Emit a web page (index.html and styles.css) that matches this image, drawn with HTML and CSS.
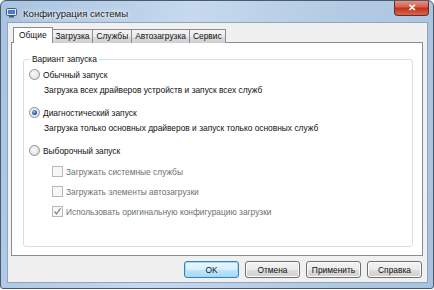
FILE: index.html
```html
<!DOCTYPE html>
<html lang="ru">
<head>
  <meta charset="UTF-8">
  <title>Конфигурация системы</title>
  <link rel="stylesheet" href="styles.css">
</head>
<body>
  <div class="window">
    <!-- Title bar -->
    <div class="titlebar">
      <svg class="app-icon" width="11" height="10" viewBox="0 0 11 10">
        <rect x="0.5" y="0.5" width="10" height="7" rx="1" fill="#dfe6ee" stroke="#4a5a70"/>
        <rect x="2" y="2" width="7" height="4" fill="#3d7fd0"/>
        <rect x="3" y="8" width="5" height="1.5" fill="#4a5a70"/>
      </svg>
      <span class="title">Конфигурация системы</span>
      <div class="close-btn">✕</div>
    </div>

    <div class="client">
      <div class="tabs">
        <div class="tab active">Общие</div>
        <div class="tab">Загрузка</div>
        <div class="tab">Службы</div>
        <div class="tab">Автозагрузка</div>
        <div class="tab">Сервис</div>
      </div>

      <div class="panel">
        <fieldset class="group">
          <legend>Вариант запуска</legend>

          <div class="option">
            <span class="radio"></span>Обычный запуск
          </div>
          <div class="hint">Загрузка всех драйверов устройств и запуск всех служб</div>

          <div class="option second">
            <span class="radio checked"></span>Диагностический запуск
          </div>
          <div class="hint">Загрузка только основных драйверов и запуск только основных служб</div>

          <div class="option second">
            <span class="radio"></span>Выборочный запуск
          </div>

          <div class="check-list">
            <div class="check disabled"><span class="box"></span>Загружать системные службы</div>
            <div class="check disabled"><span class="box"></span>Загружать элементы автозагрузки</div>
            <div class="check disabled">
              <span class="box">
                <svg width="9" height="9" viewBox="0 0 9 9"><polyline points="1.5,4.5 3.5,7 7.5,1.5" fill="none" stroke="#8a8a8a" stroke-width="1.3"/></svg>
              </span>Использовать оригинальную конфигурацию загрузки
            </div>
          </div>
        </fieldset>
      </div>

      <div class="buttons">
        <button class="btn default">OK</button>
        <button class="btn">Отмена</button>
        <button class="btn">Применить</button>
        <button class="btn">Справка</button>
      </div>
    </div>
  </div>
</body>
</html>
```

FILE: styles.css
```css
/* Window frame */
body {
  margin: 0;
  background: #fff;
  font-family: "Liberation Sans", Arial, sans-serif;
  font-size: 8.4px;
  color: #111;
}
.window {
  width: 434px;
  height: 289px;
  box-sizing: border-box;
  border: 1px solid #4b5b6e;
  border-radius: 6px 6px 3px 3px;
  background: linear-gradient(100deg, #a8c3e0 0%, #c6d9ee 40%, #b4cbe4 70%, #a9c2de 100%);
  display: flex;
  flex-direction: column;
  overflow: hidden;
}
.titlebar {
  height: 21px;
  display: flex;
  align-items: center;
  padding-left: 5px;
}
.app-icon {
  margin-right: 6px;
  margin-top: 2px;
}
.title {
  font-size: 9.6px;
  margin-top: 3px;
  color: #1a1a1a;
  text-shadow: 0 0 6px #fff, 0 0 3px #fff;
}
.close-btn {
  margin-left: auto;
  margin-right: 4px;
  align-self: flex-start;
  width: 35px;
  height: 16px;
  margin-top: -1px;
  box-sizing: border-box;
  border: 1px solid #6e2a24;
  border-top: none;
  border-radius: 0 0 4px 4px;
  background: linear-gradient(#e69b8e 0%, #d6604c 45%, #c2331d 55%, #d5664e 100%);
  color: #fff;
  font-size: 10px;
  font-weight: bold;
  text-align: center;
  line-height: 15px;
}

/* Client area */
.client {
  flex: 1;
  margin: 0 5px 5px 6px;
  background: #f0f0f0;
  border: 1px solid #8fa4bd;
  display: flex;
  flex-direction: column;
}
.tabs {
  display: flex;
  align-items: flex-end;
  padding-left: 7px;
  height: 20px;
  margin-bottom: -1px;
  position: relative;
  z-index: 1;
}
.tab {
  height: 14px;
  line-height: 13px;
  padding: 0 3px;
  box-sizing: border-box;
  border: 1px solid #898c95;
  border-bottom: none;
  margin-right: -1px;
  background: linear-gradient(#f3f3f3 0%, #ebebeb 50%, #dddddd 51%, #cfcfcf 100%);
}
.tab.active {
  height: 16px;
  line-height: 15px;
  padding: 0 5px;
  margin-left: -2px;
  margin-right: -1px;
  background: #fff;
  position: relative;
  z-index: 2;
}
.panel {
  height: 214px;
  margin: 0 4px 0 3px;
  box-sizing: border-box;
  background: #fff;
  border: 1px solid #898c95;
  padding: 10px 9px 8px 11px;
}
.group {
  margin: 0;
  height: 100%;
  box-sizing: border-box;
  border: 1px solid #d5dfe5;
  border-radius: 3px;
  padding: 2px 6px 0 5px;
}
.group legend {
  padding: 0 2px;
  margin-left: 1px;
  line-height: 13px;
}
.option {
  display: flex;
  align-items: center;
  height: 13px;
}
.option.second {
  margin-top: 9px;
}
.hint {
  height: 13px;
  line-height: 13px;
  margin: 3px 0 0 15px;
}

/* Radio buttons */
.radio {
  width: 9px;
  height: 9px;
  border: 1px solid #8f9090;
  border-radius: 50%;
  background: radial-gradient(circle at 40% 40%, #fdfdfd 0%, #e4e4e4 60%, #cfcfcf 100%);
  margin-right: 3px;
  display: flex;
  align-items: center;
  justify-content: center;
}
.radio.checked::after {
  content: "";
  width: 5px;
  height: 5px;
  border-radius: 50%;
  background: radial-gradient(circle at 40% 35%, #8ac8ee 0%, #2d5fa8 55%, #1b3c74 100%);
}

/* Check boxes */
.check-list {
  margin: 8px 0 0 23px;
  display: flex;
  flex-direction: column;
  gap: 7px;
}
.check {
  display: flex;
  align-items: center;
  height: 13px;
}
.check.disabled {
  color: #707070;
}
.box {
  width: 9px;
  height: 9px;
  border: 1px solid #b8b8b8;
  background: #f7f7f7;
  margin-right: 3px;
  display: flex;
  align-items: center;
  justify-content: center;
}

/* Dialog buttons */
.buttons {
  display: flex;
  justify-content: flex-end;
  gap: 6px;
  padding: 5px 5px 0 0;
}
.btn {
  width: 55px;
  height: 17px;
  padding: 0;
  font-family: inherit;
  font-size: 8.4px;
  color: #111;
  border: 1px solid #707070;
  border-radius: 3px;
  background: linear-gradient(#f2f2f2 0%, #ebebeb 50%, #dddddd 51%, #cfcfcf 100%);
  box-shadow: inset 0 0 0 1px #fcfcfc;
}
.btn.default {
  border-color: #3c7fb1;
  background: linear-gradient(#eaf6fd 0%, #d9f0fc 50%, #bee6fd 51%, #a7d9f5 100%);
  box-shadow: inset 0 0 0 1px #9fdcf7;
}
```
